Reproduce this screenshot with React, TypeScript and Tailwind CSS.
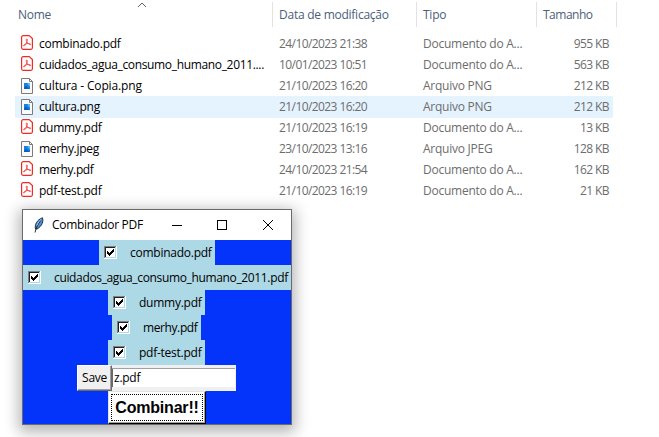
type FileRow = {
  name: string;
  date: string;
  type: string;
  size: string;
  kind: "pdf" | "img";
  tracking: string;
  active?: boolean;
};

const DOC = "Documento do A...";

const files: FileRow[] = [
  { name: "combinado.pdf", date: "24/10/2023 21:38", type: DOC, size: "955 KB", kind: "pdf", tracking: "tracking-[-0.25px]" },
  { name: "cuidados_agua_consumo_humano_2011....", date: "10/01/2023 10:51", type: DOC, size: "563 KB", kind: "pdf", tracking: "tracking-[-0.34px]" },
  { name: "cultura - Copia.png", date: "21/10/2023 16:20", type: "Arquivo PNG", size: "212 KB", kind: "img", tracking: "tracking-[-0.15px]" },
  { name: "cultura.png", date: "21/10/2023 16:20", type: "Arquivo PNG", size: "212 KB", kind: "img", tracking: "tracking-[-0.25px]", active: true },
  { name: "dummy.pdf", date: "21/10/2023 16:19", type: DOC, size: "13 KB", kind: "pdf", tracking: "tracking-[-0.25px]" },
  { name: "merhy.jpeg", date: "23/10/2023 13:16", type: "Arquivo JPEG", size: "128 KB", kind: "img", tracking: "tracking-[-0.3px]" },
  { name: "merhy.pdf", date: "24/10/2023 21:54", type: DOC, size: "162 KB", kind: "pdf", tracking: "tracking-[-0.4px]" },
  { name: "pdf-test.pdf", date: "21/10/2023 16:19", type: DOC, size: "21 KB", kind: "pdf", tracking: "tracking-[-0.25px]" },
];

const choices = [
  { name: "combinado.pdf", box: "w-[116px]", tracking: "tracking-[-0.25px]" },
  { name: "cuidados_agua_consumo_humano_2011.pdf", box: "w-[268px]", tracking: "tracking-[-0.35px]" },
  { name: "dummy.pdf", box: "mr-px w-[97px]", tracking: "tracking-[-0.25px]" },
  { name: "merhy.pdf", box: "mr-px w-[89px]", tracking: "tracking-[-0.4px]" },
  { name: "pdf-test.pdf", box: "mr-px w-[97px]", tracking: "tracking-[-0.25px]" },
];

function PdfIcon() {
  return (
    <svg width="12" height="15" viewBox="0 0 12 15" fill="none" className="relative -top-px block shrink-0">
      <path d="M2.2.6h6L11.4 3.6v9.2a1.6 1.6 0 0 1-1.6 1.6H2.2A1.6 1.6 0 0 1 .6 12.8V2.2A1.6 1.6 0 0 1 2.2.6Z" fill="#fff" stroke="#ef2b24" strokeWidth="1.2" />
      <path d="M5.9 4c-1.100 0-.8 1.800.6 3.800 1.100 1.500 3 2.400 3.100 1.400.1-1-3-.9-5-.2C3 9.600 2 10.700 2.700 11c1 .3 2.500-2.300 3.200-4.200.4-1.200.7-2.800 0-2.800Z" stroke="#f0504b" strokeWidth="1" />
    </svg>
  );
}

function ImageIcon() {
  return (
    <svg width="12" height="16" viewBox="0 0 12 16" fill="none" className="block shrink-0">
      <path d="M.5.5h8l3 3v12H.5Z" fill="#fafafa" stroke="#7b7b7b" />
      <path d="M8.5.5v3h3" stroke="#7b7b7b" />
      <path d="M3 5h6v6H3Z" fill="#1f7fdc" />
      <path d="M3 9.5 5 7.500 8.500 11H3Z" fill="#0d5fbd" />
      <path d="M6.500 5H9v3.500L7 7Z" fill="#52b8f2" />
    </svg>
  );
}

function Feather() {
  return (
    <svg width="10" height="16" viewBox="0 0 10 16" className="block">
      <path d="M1.500 12C.5 8 2.500 3 8.500.8 9.500 4 8.500 9 3 12Z" fill="#4f8fd8" stroke="#17202e" strokeWidth="0.9" />
      <path d="M1 15.500C2 11 4 7 7 3" stroke="#111827" strokeWidth="0.9" fill="none" />
      <path d="M3 8.500C4 5.500 5.500 3.500 7.300 2.300" stroke="#a9d2f6" strokeWidth="0.9" fill="none" />
    </svg>
  );
}

function CheckBox() {
  return (
    <svg width="13" height="13" viewBox="0 0 13 13" shapeRendering="crispEdges" className="block shrink-0">
      <path d="M0 0h13v13H0Z" fill="#fff" />
      <path d="M0 0h12v1H1v11H0Z" fill="#808080" />
      <path d="M1 1h10v1H2v9H1Z" fill="#202020" />
      <path d="M11 1h1v11H1v-1h10Z" fill="#add8e6" />
      <path d="M3 5h1v1h1v1h1V6h1V5h1V4h1V3h1v3H9v1H8v1H7v1H6v1H5V9H4V8H3Z" fill="#000" />
    </svg>
  );
}

export default function App() {
  return (
    <div className="h-[437px] w-[659px] overflow-hidden bg-white font-['Open_Sans','Noto_Sans',sans-serif] text-[12px] whitespace-nowrap">
      <div className="flex h-[33px] tracking-[-0.25px] text-[#4c607a]">
        <div className="relative mt-0.5 flex h-[25px] w-[273px] items-center border-r border-[#e2e2e2] pl-[18px]">
          <span>Nome</span>
          <svg width="10" height="6" viewBox="0 0 10 6" className="absolute top-0 left-[137px]" fill="none" stroke="#626262">
            <path d="m1 5 4-4 4 4" />
          </svg>
        </div>
        <div className="mt-0.5 flex h-[25px] w-[144px] items-center border-r border-[#e2e2e2] pl-1.5">
          <span>Data de modificação</span>
        </div>
        <div className="mt-0.5 flex h-[25px] w-[120px] items-center border-r border-[#e2e2e2] pl-1.5">
          <span>Tipo</span>
        </div>
        <div className="mt-0.5 flex h-[25px] w-20 items-center border-r border-[#e2e2e2] pl-1.5">
          <span className="tracking-[-0.5px]">Tamanho</span>
        </div>
      </div>

      <div className="ml-[15px] w-[598px] text-[#6d6d6d]">
        {files.map((f) => (
          <div key={f.name} className={f.active ? "-mb-px flex h-[22px] items-center bg-[#e5f3ff]" : "flex h-[21px] items-center"}>
            <div className="flex w-[264px] items-center pl-1.5">
              {f.kind === "pdf" ? <PdfIcon /> : <ImageIcon />}
              <span className={`ml-1.5 text-black ${f.tracking}`}>{f.name}</span>
            </div>
            <div className="w-36 tracking-[-0.58px]"><span>{f.date}</span></div>
            <div className="w-[120px] tracking-[-0.25px]"><span>{f.type}</span></div>
            <div className="w-[66px] text-right tracking-[-0.6px]"><span>{f.size}</span></div>
          </div>
        ))}
      </div>

      <div className="mt-2 ml-[22px] flex h-[216px] w-[270px] flex-col border border-[#6b6b6b] bg-[#0433fa] text-black shadow-[0_4px_14px_3px_rgba(0,0,0,0.3)]">
        <div className="flex h-[30px] shrink-0 items-center bg-white pl-[11px]">
          <Feather />
          <span className="ml-2 tracking-[-0.3px]">Combinador PDF</span>
          <svg width="102" height="12" viewBox="0 0 102 12" fill="none" stroke="#000" className="mr-[17px] ml-auto">
            <path d="M0 6.500h10M45.500 1.500h9v9h-9Z" shapeRendering="crispEdges" />
            <path d="m91 1 10 10M101 1 91 11" />
          </svg>
        </div>
        <div className="flex flex-col items-center">
          {choices.map((c) => (
            <label key={c.name} className={`flex h-[25px] items-center bg-[#add8e6] pl-[5px] ${c.box}`}>
              <CheckBox />
              <span className={`ml-[13px] ${c.tracking}`}>{c.name}</span>
            </label>
          ))}
          <div className="mr-px flex h-[26px]">
            <button className="h-[26px] w-[35px] border border-t-white border-r-[#696969] border-b-[#696969] border-l-white bg-[#f0f0f0] tracking-[-0.3px] shadow-[inset_-1px_-1px_#a0a0a0]">
              <span>Save</span>
            </button>
            <div className="flex h-[26px] w-[124px] items-center border-t-[3px] border-r border-b-4 border-[#f0f0f0] bg-white pl-0.5 tracking-[-0.25px] shadow-[inset_0_1px_#a0a0a0,inset_1px_0_#696969]">
              <span>z.pdf</span>
            </div>
          </div>
          <button className="h-[33px] w-[98px] border border-t-[#e3e3e3] border-r-black border-b-black border-l-[#e3e3e3] bg-white p-0.5 font-['Liberation_Sans',Arial,sans-serif] text-[16px] font-bold tracking-[-0.2px] shadow-[inset_-1px_-1px_#a0a0a0]">
            <span className="flex h-full items-center justify-center border border-dotted border-black">Combinar!!</span>
          </button>
        </div>
      </div>
    </div>
  );
}
